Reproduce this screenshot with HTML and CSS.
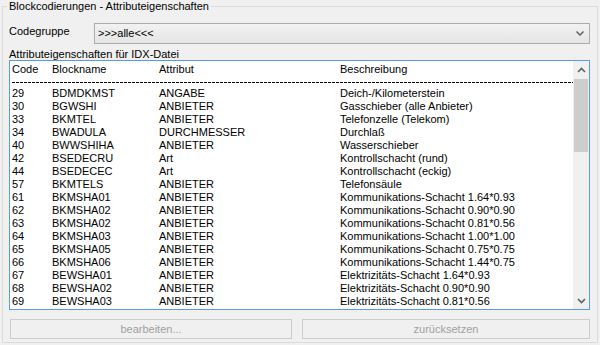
FILE: index.html
```html
<!DOCTYPE html>
<html lang="de">
<head>
<meta charset="utf-8">
<link rel="stylesheet" href="styles.css">
</head>
<body>
<fieldset class="group">
  <legend class="group-title">Blockcodierungen - Attributeigenschaften</legend>
  <div class="code-row">
    <span class="label">Codegruppe</span>
    <div class="combo">
      <span class="combo-text">&gt;&gt;&gt;alle&lt;&lt;&lt;</span>
      <svg class="chev" width="8" height="5" viewBox="0 0 8 5"><path d="M0.5 0.5 L4 4 L7.5 0.5" fill="none" stroke="#5a5a5a" stroke-width="1.4"/></svg>
    </div>
  </div>
  <div class="list-label">Attributeigenschaften für IDX-Datei</div>
  <div class="listbox">
    <div class="list">
      <div class="row head"><span>Code</span><span>Blockname</span><span>Attribut</span><span>Beschreibung</span></div>
      <div class="sep"></div>
      <div class="row"><span>29</span><span>BDMDKMST</span><span>ANGABE</span><span>Deich-/Kilometerstein</span></div>
      <div class="row"><span>30</span><span>BGWSHI</span><span>ANBIETER</span><span>Gasschieber (alle Anbieter)</span></div>
      <div class="row"><span>33</span><span>BKMTEL</span><span>ANBIETER</span><span>Telefonzelle (Telekom)</span></div>
      <div class="row"><span>34</span><span>BWADULA</span><span>DURCHMESSER</span><span>Durchlaß</span></div>
      <div class="row"><span>40</span><span>BWWSHIHA</span><span>ANBIETER</span><span>Wasserschieber</span></div>
      <div class="row"><span>42</span><span>BSEDECRU</span><span>Art</span><span>Kontrollschacht (rund)</span></div>
      <div class="row"><span>44</span><span>BSEDECEC</span><span>Art</span><span>Kontrollschacht (eckig)</span></div>
      <div class="row"><span>57</span><span>BKMTELS</span><span>ANBIETER</span><span>Telefonsäule</span></div>
      <div class="row"><span>61</span><span>BKMSHA01</span><span>ANBIETER</span><span>Kommunikations-Schacht 1.64*0.93</span></div>
      <div class="row"><span>62</span><span>BKMSHA02</span><span>ANBIETER</span><span>Kommunikations-Schacht 0.90*0.90</span></div>
      <div class="row"><span>63</span><span>BKMSHA02</span><span>ANBIETER</span><span>Kommunikations-Schacht 0.81*0.56</span></div>
      <div class="row"><span>64</span><span>BKMSHA03</span><span>ANBIETER</span><span>Kommunikations-Schacht 1.00*1.00</span></div>
      <div class="row"><span>65</span><span>BKMSHA05</span><span>ANBIETER</span><span>Kommunikations-Schacht 0.75*0.75</span></div>
      <div class="row"><span>66</span><span>BKMSHA06</span><span>ANBIETER</span><span>Kommunikations-Schacht 1.44*0.75</span></div>
      <div class="row"><span>67</span><span>BEWSHA01</span><span>ANBIETER</span><span>Elektrizitäts-Schacht 1.64*0.93</span></div>
      <div class="row"><span>68</span><span>BEWSHA02</span><span>ANBIETER</span><span>Elektrizitäts-Schacht 0.90*0.90</span></div>
      <div class="row"><span>69</span><span>BEWSHA03</span><span>ANBIETER</span><span>Elektrizitäts-Schacht 0.81*0.56</span></div>
    </div>
    <div class="scrollbar">
      <div class="sb-btn"><svg width="9" height="6" viewBox="0 0 9 6"><path d="M1 5 L4.5 1.5 L8 5" fill="none" stroke="#606060" stroke-width="1.6"/></svg></div>
      <div class="sb-track"><div class="sb-thumb"></div></div>
      <div class="sb-btn"><svg width="9" height="6" viewBox="0 0 9 6"><path d="M1 1 L4.5 4.5 L8 1" fill="none" stroke="#606060" stroke-width="1.6"/></svg></div>
    </div>
  </div>
  <div class="buttons">
    <button class="btn" disabled>bearbeiten...</button>
    <button class="btn" disabled>zurücksetzen</button>
  </div>
</fieldset>
</body>
</html>
```
FILE: styles.css
```css
html, body {
  margin: 0;
  padding: 0;
  background: #f0f0f0;
  width: 600px;
  height: 345px;
  overflow: hidden;
}
body {
  padding: 0 2px 0 2px;
  box-sizing: border-box;
  font-family: "Liberation Sans", Arial, sans-serif;
  font-size: 11px;
  line-height: 13px;
  color: #000;
}
.group {
  margin: 0;
  border: 1px solid #dcdcdc;
  padding: 10px 7px 3px 6px;
  min-width: 0;
  height: 343px;
  box-sizing: border-box;
}
.group-title {
  padding: 0 2px;
  margin-left: -2px;
  line-height: 13px;
  color: #000;
}
.code-row {
  display: flex;
  align-items: flex-start;
}
.label {
  width: 85px;
  margin-top: 2px;
}
.combo {
  width: 496px;
  height: 21px;
  box-sizing: border-box;
  border: 1px solid #adadad;
  background: linear-gradient(#f2f2f2, #e5e5e5);
  display: flex;
  align-items: center;
  justify-content: space-between;
  padding: 0 5px 0 3px;
}
.combo-text {
  line-height: 13px;
}
.chev {
  display: block;
}
.list-label {
  margin-top: 5px;
  line-height: 11px;
}
.listbox {
  height: 250px;
  box-sizing: border-box;
  border: 1px solid #569de5;
  background: #fff;
  display: flex;
}
.list {
  flex: 1;
  overflow: hidden;
  padding: 2px 0 0 2px;
}
.row {
  display: grid;
  grid-template-columns: 40px 107px 181px 1fr;
  height: 13px;
  white-space: nowrap;
}
.sep {
  height: 1px;
  margin: 6px 0 4px 0;
  width: 561px;
  background: repeating-linear-gradient(to right, #000 0 3px, transparent 3px 4px);
}
.scrollbar {
  width: 16px;
  background: #f0f0f0;
  display: flex;
  flex-direction: column;
}
.sb-btn {
  height: 17px;
  display: flex;
  align-items: center;
  justify-content: center;
}
.sb-track {
  flex: 1;
}
.sb-thumb {
  height: 73px;
  margin: 1px 1px 0 1px;
  background: #cdcdcd;
}
.buttons {
  display: grid;
  grid-template-columns: 282px 288px;
  column-gap: 10px;
  margin: 9px 0 0 1px;
}
.btn {
  height: 20px;
  border: 1px solid #cccccc;
  background: #f0f0f0;
  color: #a0a0a0;
  font-family: "Liberation Sans", Arial, sans-serif;
  font-size: 11px;
  padding: 0;
}
```
